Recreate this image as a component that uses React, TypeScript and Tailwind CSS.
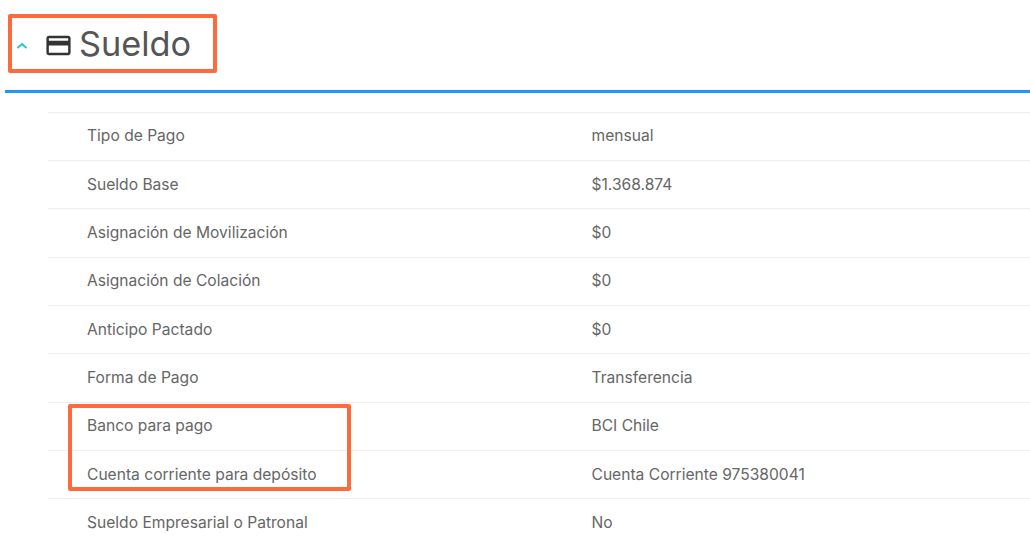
const rows = [
  ["Tipo de Pago", "mensual"],
  ["Sueldo Base", "$1.368.874"],
  ["Asignación de Movilización", "$0"],
  ["Asignación de Colación", "$0"],
  ["Anticipo Pactado", "$0"],
  ["Forma de Pago", "Transferencia"],
  ["Banco para pago", "BCI Chile"],
  ["Cuenta corriente para depósito", "Cuenta Corriente 975380041"],
  ["Sueldo Empresarial o Patronal", "No"],
];

function App() {
  return (
    <div className="relative h-[548px] w-[1030px] overflow-hidden bg-white font-['Inter',sans-serif] text-[#666666]">
      <div className="ml-[5px] flex h-[93px] items-center border-b-[3px] border-[#2196f3] pb-[3px]">
        <svg width="16" height="16" viewBox="0 0 16 16" fill="none" className="ml-[9px] mt-[4px]">
          <path d="M3.5 10L8 6l4.5 4" stroke="#26c6da" strokeWidth="2" />
        </svg>
        <svg width="29" height="29" viewBox="0 0 24 24" className="ml-[14px] mt-[3px] text-[#333]" fill="currentColor">
          <path d="M20 4H4c-1.11 0-1.99.89-1.99 2L2 18c0 1.11.89 2 2 2h16c1.11 0 2-.89 2-2V6c0-1.11-.89-2-2-2zm0 14H4v-6h16v6zm0-10H4V6h16v2z" />
        </svg>
        <h2 className="ml-[6px] mt-[1px] text-[34.3px] leading-none font-normal text-[#555555]">Sueldo</h2>
      </div>
      <div className="ml-[48px] mt-[18.7px] border-t border-[#eeeeee]">
        {rows.map(([label, value], i) => (
          <div
            key={label}
            className={
              i === rows.length - 1
                ? "flex h-[48.33px] items-center pb-[0.8px] text-[15.6px]"
                : "flex h-[48.33px] items-center border-b border-[#eeeeee] pb-[0.8px] text-[15.6px]"
            }
          >
            <div className="w-[543.5px] shrink-0 pl-[39px]">{label}</div>
            <div>{value}</div>
          </div>
        ))}
      </div>
      <div className="absolute left-[8px] top-[14px] h-[59px] w-[209px] rounded-[2px] border-4 border-[#ff6a3d]" />
      <div className="absolute left-[68px] top-[404px] h-[87px] w-[283px] rounded-[2px] border-4 border-[#ff6a3d]" />
    </div>
  );
}

export default App;
